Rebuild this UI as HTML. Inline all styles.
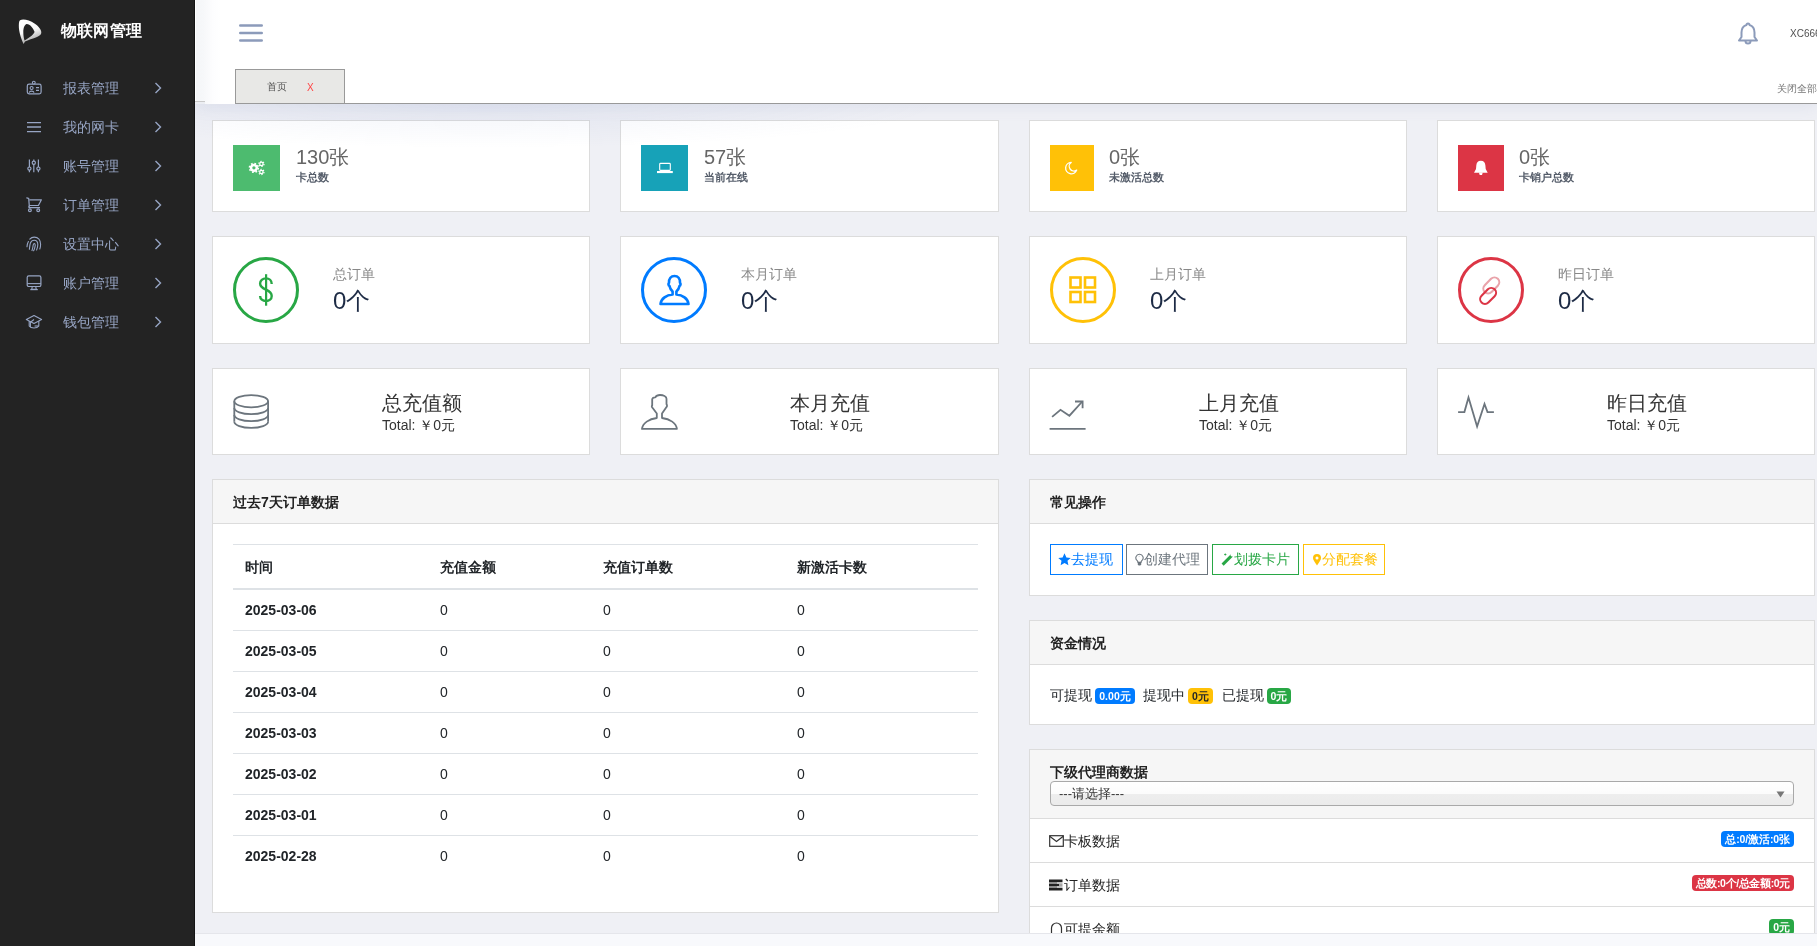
<!DOCTYPE html>
<html><head><meta charset="utf-8">
<style>
*{box-sizing:border-box;margin:0;padding:0}
html,body{width:1817px;height:946px;overflow:hidden}
body{font-family:"Liberation Sans",sans-serif;background:#eff0f5;position:relative;color:#212529;font-size:14px}
.abs{position:absolute}
#side{position:absolute;z-index:5;left:0;top:0;width:195px;height:946px;background:#232323;border-right:1px solid #141414}
.logo-t{position:absolute;left:61px;top:21px;font-size:16px;font-weight:bold;color:#fff;line-height:20px;letter-spacing:0.2px}
.mi{position:absolute;left:0;width:195px;height:39px;color:#97a5c4;font-size:14px;line-height:20px}
.mi .t{position:absolute;left:63px;top:10px}
.mi svg.ic{position:absolute;left:26px;top:12px}
.mi svg.ch{position:absolute;left:154px;top:14px}
#hdr{position:absolute;left:195px;top:0;width:1622px;height:104px;background:linear-gradient(90deg,#fff 0,#fff 1px,#f4f6f8 1px,#f7f8fa 9px,#fdfdfe 18px,#fff 26px);box-shadow:0 2px 16px rgba(110,125,175,.12);z-index:4}
#hglow{position:absolute;left:195px;top:104px;width:760px;height:44px;background:radial-gradient(ellipse 60% 100% at 38% 0%,rgba(105,130,195,.09),rgba(105,130,195,0) 100%);z-index:5;pointer-events:none}
#hpatch{position:absolute;left:195px;top:101px;width:10px;height:3px;background:#eceef3;border-top:1px solid #c9c9c9;z-index:6}
.card{position:absolute;background:#fff;border:1px solid #dcdcdc}
.r1 .box{position:absolute;left:20px;top:24px;width:47px;height:46px}
.r1 .num{position:absolute;left:83px;top:24px;font-size:20px;color:#666;line-height:24px}
.r1 .lb{position:absolute;left:83px;top:49px;font-size:11px;font-weight:bold;color:#555d6a;line-height:14px}
.r2 .circ{position:absolute;left:20px;top:20px;width:66px;height:66px;border-radius:50%;border:3px solid}
.r2 .lb{position:absolute;left:120px;top:29px;font-size:14px;color:#888;line-height:16px}
.r2 .num{position:absolute;left:120px;top:50px;font-size:24px;color:#1d2b45;line-height:28px}
.r3 svg{position:absolute;left:20px;top:24px}
.r3 .tt{position:absolute;left:169px;top:22px;font-size:20px;color:#333;line-height:24px}
.r3 .st{position:absolute;left:169px;top:48px;font-size:14px;color:#333;line-height:16px}
.panel{position:absolute;background:#fff;border:1px solid #dcdcdc}
.ph{position:absolute;left:0;top:0;right:0;height:44px;background:#f6f6f6;border-bottom:1px solid #dcdcdc;font-size:14px;font-weight:bold;color:#222;padding:14px 0 0 20px;line-height:16px}
.tbl{border-collapse:collapse;table-layout:fixed;font-size:14px;color:#212529}
.tbl th{height:44px;text-align:left;padding:4px 12px 0;border-top:1px solid #dee2e6;border-bottom:2px solid #dee2e6;font-weight:bold;vertical-align:middle}
.tbl td{height:41px;padding:0 12px;border-top:1px solid #dee2e6;vertical-align:middle}
.tbl tbody tr:first-child td{border-top:none;height:42px}
.tbl td.d{font-weight:bold}
.btn{display:inline-block;height:31px;border:1px solid;font-size:14px;line-height:29px;padding:0 0 0 8px;vertical-align:top}
.bdg{display:inline-block;font-size:10.5px;font-weight:bold;line-height:1;padding:2.5px 4px 3px;border-radius:4px;vertical-align:1px}
.li{position:absolute;left:0;right:0;height:44px;border-bottom:1px solid #dcdcdc;font-size:14px;color:#222;line-height:44px;padding-left:19px}
.li .r{position:absolute;right:20px;top:12px}
.sel{border:1px solid #a9a9a9;border-radius:4px;background:linear-gradient(#fff 0,#fcfcfc 50%,#eeeeee 54%,#ebebeb 100%);font-size:14px;color:#333;line-height:18px}
#foot{position:absolute;left:195px;top:933px;width:1622px;height:13px;background:#f8f9fc;border-top:1px solid #e5e6eb;z-index:3}
#side,#main,#hdr{will-change:transform}
</style></head><body>
<div id="side">
  <svg class="abs" style="left:14px;top:16px" width="32" height="32" viewBox="0 0 32 32"><defs><linearGradient id="lg" x1="0" y1="0" x2="0.3" y2="1"><stop offset="0" stop-color="#fff"/><stop offset="0.55" stop-color="#fafafa"/><stop offset="1" stop-color="#a8a8a8"/></linearGradient></defs><path fill="url(#lg)" fill-rule="evenodd" d="M6 4.2C9.5 2.6 15.5 4.2 20.5 7.5C24.5 10.2 27.3 13.5 27.3 16.5C27.3 18.5 25.8 19.8 23 21C19 22.8 14 24 11 25.5L9.6 28C7.8 24.5 5.3 17.5 4.9 12C4.7 8.2 4.9 5.2 6 4.2Z M12.8 8C10.5 8.5 9.3 12 9.3 16C9.3 19 9.8 22 10.5 24.5C14 22.5 19 19.5 20.6 16C19.5 12.5 16 8 12.8 8Z"/></svg>
  <div class="logo-t">物联网管理</div>
  <div class="mi" style="top:68px"><svg class="ic" width="16" height="15" viewBox="0 0 16 15" style="overflow:visible"><rect x="1.3" y="4.2" width="13.8" height="9.6" rx="1.8" fill="none" stroke="#97a5c4" stroke-width="1.2"/><circle cx="7.8" cy="2.6" r="1.4" fill="#232323" stroke="#97a5c4" stroke-width="1.1"/><circle cx="5.6" cy="8" r="1.5" fill="none" stroke="#97a5c4" stroke-width="1.1"/><path d="M3.2 12.6C3.6 10.6 7.6 10.6 8 12.6" fill="none" stroke="#97a5c4" stroke-width="1.1"/><path d="M10 7.6h3M10 10.4h3" stroke="#97a5c4" stroke-width="1.2"/></svg><span class="t">报表管理</span><svg class="ch" width="8" height="12" viewBox="0 0 8 12"><path d="M1.5 1 L6.5 6 L1.5 11" fill="none" stroke="#97a5c4" stroke-width="1.4"/></svg></div>
  <div class="mi" style="top:107px"><svg class="ic" width="16" height="15" viewBox="0 0 16 15" style="overflow:visible"><path d="M1 3.6h14M1 8h14M1 12.6h14" stroke="#97a5c4" stroke-width="1.3"/></svg><span class="t">我的网卡</span><svg class="ch" width="8" height="12" viewBox="0 0 8 12"><path d="M1.5 1 L6.5 6 L1.5 11" fill="none" stroke="#97a5c4" stroke-width="1.4"/></svg></div>
  <div class="mi" style="top:146px"><svg class="ic" width="16" height="15" viewBox="0 0 16 15" style="overflow:visible"><path d="M3.4 1.6v12.7M7.8 1.6v12.7M12.4 1.6v12.7" stroke="#97a5c4" stroke-width="1.2"/><circle cx="3.4" cy="10.6" r="1.6" fill="#232323" stroke="#97a5c4" stroke-width="1.2"/><circle cx="7.8" cy="4.7" r="1.6" fill="#232323" stroke="#97a5c4" stroke-width="1.2"/><circle cx="12.4" cy="10.6" r="1.6" fill="#232323" stroke="#97a5c4" stroke-width="1.2"/></svg><span class="t">账号管理</span><svg class="ch" width="8" height="12" viewBox="0 0 8 12"><path d="M1.5 1 L6.5 6 L1.5 11" fill="none" stroke="#97a5c4" stroke-width="1.4"/></svg></div>
  <div class="mi" style="top:185px"><svg class="ic" width="16" height="15" viewBox="0 0 16 15" style="overflow:visible"><path d="M0.8 0.9L2.7 1.5L3.3 9.1" fill="none" stroke="#97a5c4" stroke-width="1.2" stroke-linecap="round"/><path d="M3.3 2.8H15.4L12.4 8.5H4" fill="none" stroke="#97a5c4" stroke-width="1.2" stroke-linejoin="round"/><path d="M4 8.5C2.6 9 2.4 10.7 3.6 10.7H14" fill="none" stroke="#97a5c4" stroke-width="1.2"/><circle cx="3.9" cy="13.2" r="1.4" fill="none" stroke="#97a5c4" stroke-width="1.2"/><circle cx="12.2" cy="13.2" r="1.4" fill="none" stroke="#97a5c4" stroke-width="1.2"/></svg><span class="t">订单管理</span><svg class="ch" width="8" height="12" viewBox="0 0 8 12"><path d="M1.5 1 L6.5 6 L1.5 11" fill="none" stroke="#97a5c4" stroke-width="1.4"/></svg></div>
  <div class="mi" style="top:224px"><svg class="ic" width="16" height="15" viewBox="0 0 16 15" style="overflow:visible"><g fill="none" stroke="#97a5c4" stroke-width="1.1" stroke-linecap="round"><path d="M1 10.8C1.2 8.5 1.6 6.8 2.4 5.5"/><path d="M3.8 3.2C5 1.8 6.6 1.1 8.2 1.1C12.2 1.1 14.6 4.2 14.6 8.2C14.6 10 14.3 11.6 13.8 13"/><path d="M3.4 13.2C3.6 11 3.8 8.6 4.4 7C5.1 5.2 6.6 4.2 8.2 4.2C10.4 4.2 11.8 6.2 11.8 8.6C11.8 10.6 11.3 12.4 10.6 14"/><path d="M6 14.6C6.6 12.8 7 10.6 7.2 9C7.4 7.8 8.4 7.3 9 8C9.4 8.5 9.2 10.6 8.6 12.4C8.3 13.3 7.9 14.2 7.6 14.8"/></g></svg><span class="t">设置中心</span><svg class="ch" width="8" height="12" viewBox="0 0 8 12"><path d="M1.5 1 L6.5 6 L1.5 11" fill="none" stroke="#97a5c4" stroke-width="1.4"/></svg></div>
  <div class="mi" style="top:263px"><svg class="ic" width="16" height="15" viewBox="0 0 16 15" style="overflow:visible"><rect x="1.2" y="0.8" width="13.7" height="10.7" rx="1.6" fill="none" stroke="#97a5c4" stroke-width="1.2"/><path d="M1.2 8.6h13.7" stroke="#97a5c4" stroke-width="1.1"/><path d="M6.3 11.5L5.7 14.3H10.3L9.7 11.5" fill="none" stroke="#97a5c4" stroke-width="1.1"/><path d="M4.3 14.6H11.8" stroke="#97a5c4" stroke-width="1.2"/></svg><span class="t">账户管理</span><svg class="ch" width="8" height="12" viewBox="0 0 8 12"><path d="M1.5 1 L6.5 6 L1.5 11" fill="none" stroke="#97a5c4" stroke-width="1.4"/></svg></div>
  <div class="mi" style="top:302px"><svg class="ic" width="16" height="15" viewBox="0 0 16 15" style="overflow:visible"><g fill="none" stroke="#97a5c4" stroke-width="1.1" stroke-linejoin="round"><path d="M0.3 5.5L8 1.5L15.6 5.5L8 9.5Z"/><path d="M3.2 7V12C5 14.6 11 14.6 12.8 12V7"/><path d="M8 5.5L4.4 8.3V13.2"/><path d="M8.6 12H12.8"/></g></svg><span class="t">钱包管理</span><svg class="ch" width="8" height="12" viewBox="0 0 8 12"><path d="M1.5 1 L6.5 6 L1.5 11" fill="none" stroke="#97a5c4" stroke-width="1.4"/></svg></div>
</div>
<div id="hdr">
  <svg class="abs" style="left:43.5px;top:22px" width="24" height="22" viewBox="0 0 24 22"><path d="M1.3 3.5h21.4M1.3 11h21.4M1.3 18.5h21.4" stroke="#8c9bba" stroke-width="2.6" stroke-linecap="round"/></svg>
  <svg class="abs" style="left:1542px;top:22px" width="22" height="23" viewBox="0 0 22 23"><path d="M11 1.5c-1 0-1.5.7-1.5 1.5C6 4,4.5 7,4.5 10.5V15L2 18.5h18L17.5 15v-4.5C17.5 7,16 4,12.5 3C12.5 2.2 12 1.5 11 1.5Z" fill="none" stroke="#8c9bba" stroke-width="2" stroke-linejoin="round"/><path d="M8.5 19a2.5 2.5 0 0 0 5 0" fill="none" stroke="#8c9bba" stroke-width="2"/></svg>
  <div class="abs" style="left:1595px;top:28px;font-size:10px;color:#505050;line-height:12px;white-space:nowrap">XC6666</div>
  <div class="abs" style="left:40px;top:103px;width:1582px;height:1px;background:#999"></div>
  <div class="abs" style="left:40px;top:69px;width:110px;height:35px;background:#e8e8e6;border:1px solid #999"></div>
  <div class="abs" style="left:72px;top:81px;font-size:10px;color:#555;line-height:12px">首页</div>
  <div class="abs" style="left:112px;top:82px;font-size:10px;color:#f44;line-height:12px">X</div>
  <div class="abs" style="left:1582px;top:83px;font-size:10px;color:#777;line-height:12px;white-space:nowrap">关闭全部</div>
</div>
<div id="hpatch"></div>
<div id="hglow"></div>
<div id="main">
<div class="card r1" style="left:212px;top:120px;width:378px;height:92px"><div class="box" style="background:#4dbb6f"><svg class="abs" style="left:0;top:0" width="47" height="46" viewBox="0 0 47 46"><g fill="none" stroke="#fff"><circle cx="20.9" cy="22.85" r="2.9" stroke-width="2.5"/><circle cx="20.9" cy="22.85" r="4.5" stroke-width="1.5" stroke-dasharray="1.7 1.83"/><circle cx="28.4" cy="18.9" r="1.7" stroke-width="1.3"/><circle cx="28.4" cy="18.9" r="2.65" stroke-width="1.1" stroke-dasharray="1.3 1.48"/><circle cx="28.4" cy="27" r="1.7" stroke-width="1.3"/><circle cx="28.4" cy="27" r="2.65" stroke-width="1.1" stroke-dasharray="1.3 1.48"/></g></svg></div><div class="num">130张</div><div class="lb">卡总数</div></div>
<div class="card r1" style="left:620px;top:120px;width:379px;height:92px"><div class="box" style="background:#17a2b8"><svg class="abs" style="left:0;top:0" width="47" height="46" viewBox="0 0 47 46"><rect x="18.7" y="18.4" width="10.6" height="7" rx="0.8" fill="none" stroke="#fff" stroke-width="1.1"/><rect x="16" y="26" width="15.8" height="2.1" fill="#fff"/></svg></div><div class="num">57张</div><div class="lb">当前在线</div></div>
<div class="card r1" style="left:1029px;top:120px;width:378px;height:92px"><div class="box" style="background:#ffc107;width:44px"><svg class="abs" style="left:0;top:0" width="44" height="46" viewBox="0 0 44 46"><path d="M21.2 17.4A5.7 5.7 0 1 0 26.7 25.1A4.4 4.4 0 0 1 21.2 17.4Z" fill="none" stroke="#fff" stroke-width="1.3" stroke-linejoin="round"/></svg></div><div class="num" style="left:79px">0张</div><div class="lb" style="left:79px">未激活总数</div></div>
<div class="card r1" style="left:1437px;top:120px;width:378px;height:92px"><div class="box" style="background:#dc3545;width:46px"><svg class="abs" style="left:0;top:0" width="46" height="46" viewBox="0 0 46 46"><path d="M22.85 15.8C20 15.8 18.5 17.5 18.3 20.5L18 24L16 27.8H29.7L27.7 24L27.4 20.5C27.2 17.5 25.7 15.8 22.85 15.8Z" fill="#fff"/><path d="M20.9 27.5H24.8L24 29.9H21.7Z" fill="#fff"/></svg></div><div class="num" style="left:81px">0张</div><div class="lb" style="left:81px">卡销户总数</div></div>
<div class="card r2" style="left:212px;top:236px;width:378px;height:108px"><div class="circ" style="border-color:#28a745"><svg class="abs" style="left:-3px;top:-3px" width="66" height="66" viewBox="0 0 66 66"><path d="M38.7 27C38.7 23.5 36.3 21.4 33 21.4C29.6 21.4 27.1 23.5 27.1 26.5C27.1 30 30 31.3 33 32.7C36 34.1 38.7 35.5 38.7 39C38.7 42 36.3 44 33 44C29.6 44 27.1 42 27.1 39" fill="none" stroke="#28a745" stroke-width="2.4"/><path d="M33.1 17.2V48.7" stroke="#28a745" stroke-width="2.2"/></svg></div><div class="lb">总订单</div><div class="num">0个</div></div>
<div class="card r2" style="left:620px;top:236px;width:379px;height:108px"><div class="circ" style="border-color:#007bff"><svg class="abs" style="left:-3px;top:-3px" width="66" height="66" viewBox="0 0 66 66"><path d="M31.6 37.5V34.5C30.2 33.3 29 31.5 28.5 29C27.2 28.5 27.2 26.5 28 25.8C27.8 21.5 30 19 33.5 19C37 19 39.2 21.5 39 25.8C39.8 26.5 39.8 28.5 38.5 29C38 31.5 36.8 33.3 35.4 34.5V37.5C41.4 38 47 41.5 47.5 47H19.5C20 41.5 25.6 38 31.6 37.5Z" fill="none" stroke="#007bff" stroke-width="2.6" stroke-linejoin="round"/></svg></div><div class="lb">本月订单</div><div class="num">0个</div></div>
<div class="card r2" style="left:1029px;top:236px;width:378px;height:108px"><div class="circ" style="border-color:#ffc107"><svg class="abs" style="left:15px;top:15px" width="30" height="30" viewBox="0 0 30 30"><g fill="none" stroke="#ffc107" stroke-width="2.6"><rect x="2.5" y="2.5" width="10" height="10"/><rect x="17" y="2.5" width="10" height="10"/><rect x="2.5" y="17" width="10" height="10"/><rect x="17" y="17" width="10" height="10"/></g></svg></div><div class="lb">上月订单</div><div class="num">0个</div></div>
<div class="card r2" style="left:1437px;top:236px;width:378px;height:108px"><div class="circ" style="border-color:#dc3545"><svg class="abs" style="left:-3px;top:-3px" width="66" height="66" viewBox="0 0 66 66"><g fill="none" stroke-width="2.1"><rect x="-9.25" y="-4.8" width="18.5" height="9.6" rx="4.8" transform="translate(33.3 28.4) rotate(-45)" stroke="#e9a3aa"/><rect x="-9.25" y="-4.8" width="18.5" height="9.6" rx="4.8" transform="translate(30.1 38.9) rotate(-45)" stroke="#dc3545"/></g></svg></div><div class="lb">昨日订单</div><div class="num">0个</div></div>
<div class="card r3" style="left:212px;top:368px;width:378px;height:87px"><svg width="38" height="38" viewBox="0 0 38 38" style="overflow:visible"><g fill="none" stroke="#6c757d" stroke-width="1.8"><ellipse cx="18.2" cy="8.2" rx="16.9" ry="6.1"/><path d="M1.3 8.2V28.8M35.1 8.2V28.8"/><path d="M1.3 15.1A16.9 6.1 0 0 0 35.1 15.1M1.3 22A16.9 6.1 0 0 0 35.1 22M1.3 28.8A16.9 6.1 0 0 0 35.1 28.8"/></g></svg><div class="tt">总充值额</div><div class="st">Total: ￥0元</div></div>
<div class="card r3" style="left:620px;top:368px;width:379px;height:87px"><svg width="38" height="38" viewBox="0 0 38 38" style="overflow:visible"><path d="M15.8 25V20.5L11.5 14.8C10.6 14 10.6 13 11.2 12.4V6.2C11.5 5 12.8 4.4 14.3 4.4C15.3 2.6 17.2 2 19 2C22.3 2 25.5 3.5 25.5 5.8V11.2C26.2 12 26.2 13.4 25.5 14L21 20.5V25C29 26 35.2 30 35.9 35.9H1C1.7 30 8 26 15.8 25Z" fill="none" stroke="#6c757d" stroke-width="1.8" stroke-linejoin="round"/></svg><div class="tt">本月充值</div><div class="st">Total: ￥0元</div></div>
<div class="card r3" style="left:1029px;top:368px;width:378px;height:87px"><svg width="38" height="38" viewBox="0 0 38 38" style="overflow:visible"><g fill="none" stroke="#6c757d" stroke-width="1.8"><path d="M-0.4 35.9H35.6"/><path d="M2.1 23.9L10.5 16.8L19.4 22.7L32.3 8.5"/><path d="M25 8.5H32.6V15.3"/></g></svg><div class="tt">上月充值</div><div class="st">Total: ￥0元</div></div>
<div class="card r3" style="left:1437px;top:368px;width:378px;height:87px"><svg width="38" height="38" viewBox="0 0 38 38" style="overflow:visible"><path d="M0.1 19.1H6.4L10.5 4.5L19.1 33.5L26.5 11L29.5 19.1H35.9" fill="none" stroke="#6c757d" stroke-width="1.8"/></svg><div class="tt">昨日充值</div><div class="st">Total: ￥0元</div></div>
<div class="panel" style="left:212px;top:479px;width:787px;height:434px">
 <div class="ph">过去7天订单数据</div>
 <table class="tbl" style="position:absolute;left:20px;top:64px;width:745px">
  <thead><tr><th style="width:195px">时间</th><th style="width:163px">充值金额</th><th style="width:194px">充值订单数</th><th>新激活卡数</th></tr></thead>
  <tbody><tr><td class="d">2025-03-06</td><td>0</td><td>0</td><td>0</td></tr><tr><td class="d">2025-03-05</td><td>0</td><td>0</td><td>0</td></tr><tr><td class="d">2025-03-04</td><td>0</td><td>0</td><td>0</td></tr><tr><td class="d">2025-03-03</td><td>0</td><td>0</td><td>0</td></tr><tr><td class="d">2025-03-02</td><td>0</td><td>0</td><td>0</td></tr><tr><td class="d">2025-03-01</td><td>0</td><td>0</td><td>0</td></tr><tr><td class="d">2025-02-28</td><td>0</td><td>0</td><td>0</td></tr></tbody>
 </table>
</div>
<div class="panel" style="left:1029px;top:479px;width:786px;height:117px">
 <div class="ph">常见操作</div>
 <div class="abs" style="left:20px;top:64px;white-space:nowrap;font-size:0">
  <span class="btn" style="color:#007bff;border-color:#007bff;width:73px;padding-left:7px"><svg width="13" height="13" viewBox="0 0 12 12" style="vertical-align:-1.5px"><path d="M6 0.3l1.75 3.75 4 .45-3 2.75.85 4L6 9.2 2.4 11.25l.85-4-3-2.75 4-.45Z" fill="#007bff"/></svg>去提现</span>
  <span class="btn" style="color:#6c757d;border-color:#6c757d;width:82px;margin-left:3px"><svg width="9" height="13" viewBox="0 0 9 13" style="vertical-align:-2px"><path d="M4.5 1.2A3.6 3.6 0 0 0 2.2 7.6C2.7 8.2 3 8.8 3 9.4H6C6 8.8 6.3 8.2 6.8 7.6A3.6 3.6 0 0 0 4.5 1.2Z" fill="none" stroke="#6c757d" stroke-width="1.1"/><path d="M2.8 9.2H6.2V11.2L5.4 12.4H3.6L2.8 11.2Z" fill="#6c757d"/><path d="M3.6 3.6C4 3.2 4.5 3.2 4.9 3.6" stroke="#c8ccd0" stroke-width="0.8" fill="none"/></svg>创建代理</span>
  <span class="btn" style="color:#28a745;border-color:#28a745;width:87px;margin-left:4px"><svg width="13" height="13" viewBox="0 0 13 13" style="vertical-align:-1.5px"><path d="M1.6 11.6L10.6 2.6" stroke="#28a745" stroke-width="3"/><path d="M9.4 2.4L10.6 1.2L11.8 2.4L10.6 3.6Z" fill="#fff"/><path d="M3.2 1.5H5.4M4.3 0.5V2.5" stroke="#28a745" stroke-width="0.9"/></svg>划拨卡片</span>
  <span class="btn" style="color:#ffc107;border-color:#ffc107;width:82px;margin-left:4px"><svg width="10" height="13" viewBox="0 0 10 13" style="vertical-align:-2px"><path d="M5 12.5C2.5 9 1 6.8 1 5a4 4 0 0 1 8 0c0 1.8-1.5 4-4 7.5Z" fill="#ffc107"/><circle cx="5" cy="5" r="1.5" fill="#fff"/></svg>分配套餐</span>
 </div>
</div>
<div class="panel" style="left:1029px;top:620px;width:786px;height:105px">
 <div class="ph">资金情况</div>
 <div class="abs" style="left:0;top:65px;width:400px;height:20px;white-space:nowrap;font-size:14px;color:#212529;line-height:18px"><span class="abs" style="left:20px;top:0">可提现</span><span class="bdg abs" style="left:65px;top:2px;width:40px;text-align:center;padding-left:0;padding-right:0;background:#007bff;color:#fff">0.00元</span><span class="abs" style="left:113px;top:0">提现中</span><span class="bdg abs" style="left:158px;top:2px;width:25px;text-align:center;padding-left:0;padding-right:0;background:#ffc107;color:#212529">0元</span><span class="abs" style="left:192px;top:0">已提现</span><span class="bdg abs" style="left:237px;top:2px;width:24px;text-align:center;padding-left:0;padding-right:0;background:#28a745;color:#fff">0元</span></div>
</div>
<div class="panel" style="left:1029px;top:749px;width:786px;height:260px">
 <div class="ph" style="height:69px;padding-top:14px">下级代理商数据</div>
 <div class="sel abs" style="left:20px;top:31px;width:744px;height:25px"><span style="position:absolute;left:8px;top:3px;font-size:13px">---请选择---</span><svg class="abs" style="right:8px;top:9px" width="9" height="7" viewBox="0 0 9 7"><path d="M0.5 0.5h8L4.5 6.5Z" fill="#777"/></svg></div>
 <div class="li" style="top:69px"><svg width="15" height="12" viewBox="0 0 15 12" style="vertical-align:-1px"><rect x="0.7" y="0.7" width="13.6" height="10.6" fill="none" stroke="#333" stroke-width="1.2"/><path d="M0.7 1.2L7.5 6.5l6.8-5.3" fill="none" stroke="#333" stroke-width="1.2"/></svg>卡板数据<span class="bdg r" style="background:#007bff;color:#fff;letter-spacing:-0.1px">总:0/激活:0张</span></div>
 <div class="li" style="top:113px"><svg width="15" height="12" viewBox="0 0 15 12" style="vertical-align:-1px"><path d="M0 2h13.5M0 6h13.5M0 10h13.5" stroke="#222" stroke-width="3"/><path d="M8 4h6M8 8h6" stroke="#fff" stroke-width="0.9"/><path d="M10 6h4" stroke="#fff" stroke-width="1.2"/></svg>订单数据<span class="bdg r" style="background:#dc3545;color:#fff;letter-spacing:-0.35px">总数:0个/总金额:0元</span></div>
 <div class="li" style="top:157px;border-bottom:none"><svg width="15" height="14" viewBox="0 0 15 14" style="vertical-align:-2px"><path d="M2.5 14V6a5 5 0 0 1 10 0v8" fill="none" stroke="#333" stroke-width="1.2"/></svg>可提余额<span class="bdg r" style="background:#28a745;color:#fff">0元</span></div>
</div>
<div id="foot"></div>
</div>
</body></html>
